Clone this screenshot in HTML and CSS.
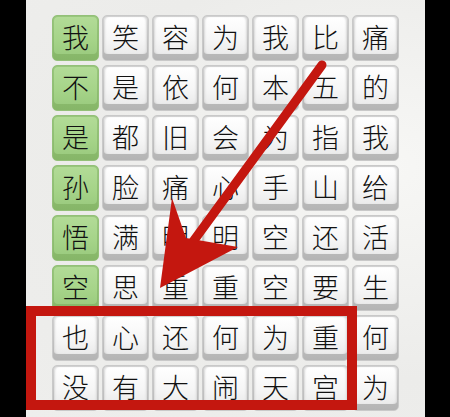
FILE: index.html
```html
<!DOCTYPE html>
<html lang="zh">
<head>
<meta charset="utf-8">
<link rel="stylesheet" href="styles.css">
</head>
<body>
<div class="screen">
  <div class="panel">
    <div class="grid">
      <div class="tile green"><span>我</span></div><div class="tile"><span>笑</span></div><div class="tile"><span>容</span></div><div class="tile"><span>为</span></div><div class="tile"><span>我</span></div><div class="tile"><span>比</span></div><div class="tile"><span>痛</span></div>
      <div class="tile green"><span>不</span></div><div class="tile"><span>是</span></div><div class="tile"><span>依</span></div><div class="tile"><span>何</span></div><div class="tile"><span>本</span></div><div class="tile"><span>五</span></div><div class="tile"><span>的</span></div>
      <div class="tile green"><span>是</span></div><div class="tile"><span>都</span></div><div class="tile"><span>旧</span></div><div class="tile"><span>会</span></div><div class="tile"><span>为</span></div><div class="tile"><span>指</span></div><div class="tile"><span>我</span></div>
      <div class="tile green"><span>孙</span></div><div class="tile"><span>脸</span></div><div class="tile"><span>痛</span></div><div class="tile"><span>心</span></div><div class="tile"><span>手</span></div><div class="tile"><span>山</span></div><div class="tile"><span>给</span></div>
      <div class="tile green"><span>悟</span></div><div class="tile"><span>满</span></div><div class="tile"><span>明</span></div><div class="tile"><span>明</span></div><div class="tile"><span>空</span></div><div class="tile"><span>还</span></div><div class="tile"><span>活</span></div>
      <div class="tile green"><span>空</span></div><div class="tile"><span>思</span></div><div class="tile"><span>重</span></div><div class="tile"><span>重</span></div><div class="tile"><span>空</span></div><div class="tile"><span>要</span></div><div class="tile"><span>生</span></div>
      <div class="tile"><span>也</span></div><div class="tile"><span>心</span></div><div class="tile"><span>还</span></div><div class="tile"><span>何</span></div><div class="tile"><span>为</span></div><div class="tile"><span>重</span></div><div class="tile"><span>何</span></div>
      <div class="tile"><span>没</span></div><div class="tile"><span>有</span></div><div class="tile"><span>大</span></div><div class="tile"><span>闹</span></div><div class="tile"><span>天</span></div><div class="tile"><span>宫</span></div><div class="tile"><span>为</span></div>
    </div>
    <div class="highlight"></div>
    <svg class="arrow" width="450" height="417" viewBox="0 0 450 417">
      <line x1="322" y1="65" x2="192" y2="243" stroke="#c4170f" stroke-width="9" stroke-linecap="round"/>
      <polygon points="160,288 172,198 186,238 238,247" fill="#c4170f"/>
    </svg>
  </div>
</div>
</body>
</html>
```
FILE: styles.css
```css
html, body {
  margin: 0;
  padding: 0;
  background: #000;
}
.screen {
  width: 450px;
  height: 417px;
  background: #000;
  overflow: hidden;
  position: relative;
}
.panel {
  margin-left: 26px;
  width: 399px;
  height: 417px;
  background: radial-gradient(ellipse at 90% 40%, #f7f7f5 0%, #ececea 60%, #eeeeec 100%);
  padding-top: 15px;
  box-sizing: border-box;
}
.grid {
  margin-left: 26px;
  display: grid;
  grid-template-columns: repeat(7, 47px);
  grid-auto-rows: 46px;
  column-gap: 3px;
  row-gap: 4px;
}
.tile {
  box-sizing: border-box;
  border-radius: 5px;
  border: 1px solid #c9c9c9;
  background: linear-gradient(#d2d2d2, #b4b4b4);
  padding: 1px 1px 6px 1px;
  display: flex;
}
.tile span {
  flex: 1;
  border-radius: 4px;
  background: linear-gradient(180deg, #ffffff 0%, #f6f6f6 60%, #ebebeb 100%);
  box-shadow: inset 2px 0 2px -1px #d8d8d8, inset -2px 0 2px -1px #d8d8d8;
  display: flex;
  align-items: center;
  justify-content: center;
  font-family: "Noto Sans CJK SC", "Noto Sans CJK JP", sans-serif;
  font-size: 27px;
  font-weight: 300;
  color: #111;
  line-height: 1;
  padding-top: 2px;
}
.tile.green {
  border-color: #93c078;
  background: linear-gradient(#99c77d, #86b668);
}
.tile.green span {
  background: linear-gradient(180deg, #b2db97 0%, #a6d489 60%, #9ccc80 100%);
  box-shadow: none;
}
.highlight {
  position: absolute;
  left: 26px;
  top: 306px;
  width: 331px;
  height: 104px;
  box-sizing: border-box;
  border: 10px solid #c4170f;
}
.arrow {
  position: absolute;
  left: 0;
  top: 0;
}
```
